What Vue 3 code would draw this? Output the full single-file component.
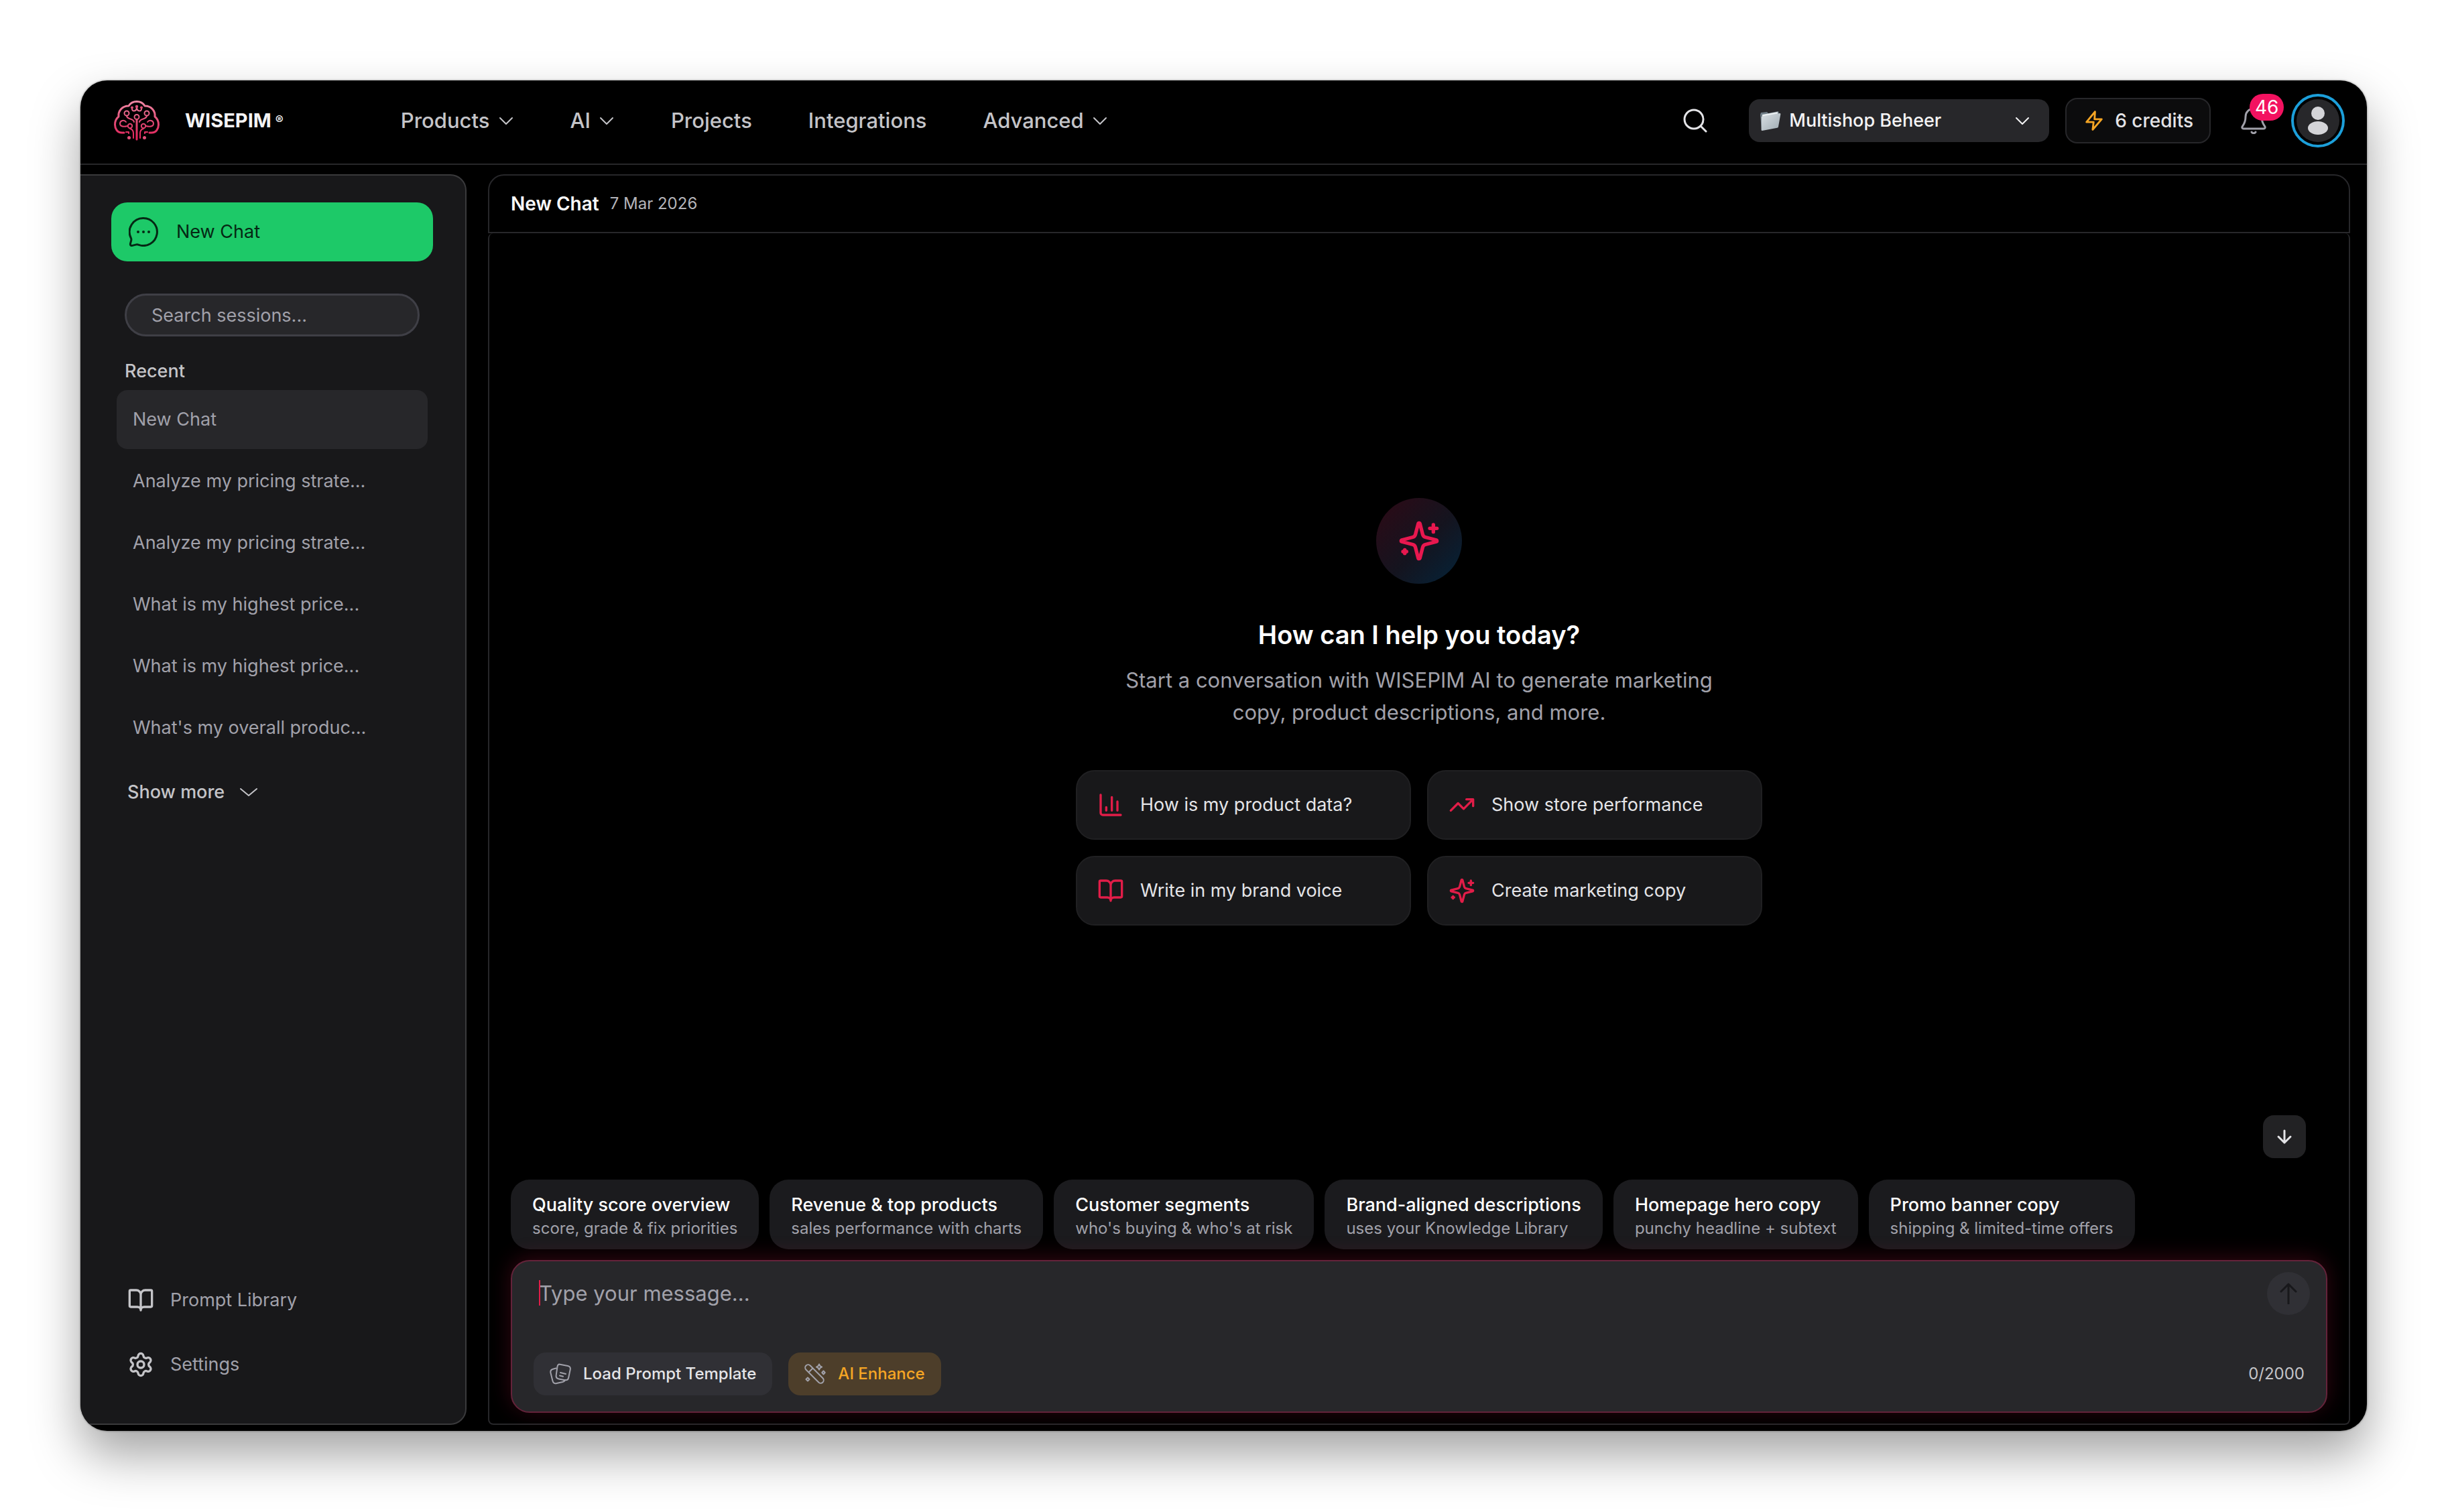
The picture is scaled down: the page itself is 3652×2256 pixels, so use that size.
<script setup>
import { ref } from 'vue';

const search = ref('');
const message = ref('');
const shop = ref('Multishop Beheer');
const active = ref(0);

const nav = [
  { label: 'Products', menu: true },
  { label: 'AI', menu: true },
  { label: 'Projects', menu: false },
  { label: 'Integrations', menu: false },
  { label: 'Advanced', menu: true }
];

const sessions = [
  'New Chat',
  'Analyze my pricing strate...',
  'Analyze my pricing strate...',
  'What is my highest price...',
  'What is my highest price...',
  "What's my overall produc..."
];

const starters = [
  { icon: 'chart', label: 'How is my product data?' },
  { icon: 'trend', label: 'Show store performance' },
  { icon: 'book', label: 'Write in my brand voice' },
  { icon: 'sparkles', label: 'Create marketing copy' }
];

const chips = [
  { title: 'Quality score overview', text: 'score, grade & fix priorities' },
  { title: 'Revenue & top products', text: 'sales performance with charts' },
  { title: 'Customer segments', text: "who's buying & who's at risk" },
  { title: 'Brand-aligned descriptions', text: 'uses your Knowledge Library' },
  { title: 'Homepage hero copy', text: 'punchy headline + subtext' },
  { title: 'Promo banner copy', text: 'shipping & limited-time offers' }
];

const icons = {
  chart: 'M3 3v16a2 2 0 0 0 2 2h16M18 17V9M13 17V5M8 17v-3',
  trend: 'M16 7h6v6M22 7l-8.5 8.5-5-5L2 17',
  book: 'M12 7v14M3 18a1 1 0 0 1-1-1V4a1 1 0 0 1 1-1h5a4 4 0 0 1 4 4 4 4 0 0 1 4-4h5a1 1 0 0 1 1 1v13a1 1 0 0 1-1 1h-6a3 3 0 0 0-3 3 3 3 0 0 0-3-3z',
  sparkles: 'M9.937 15.5A2 2 0 0 0 8.5 14.063l-6.135-1.582a.5.5 0 0 1 0-.962L8.5 9.936A2 2 0 0 0 9.937 8.5l1.582-6.135a.5.5 0 0 1 .963 0L14.063 8.5A2 2 0 0 0 15.5 9.937l6.135 1.581a.5.5 0 0 1 0 .964L15.5 14.063a2 2 0 0 0-1.437 1.437l-1.582 6.135a.5.5 0 0 1-.963 0zM20 3v4M22 5h-4M4 17v2M5 18H3'
};
</script>

<template>
  <div class="page">
    <div class="window">
      <header class="topbar">
        <a href="#" class="brand">
          <svg class="logo" viewBox="0 0 68 60" fill="none" stroke="url(#brain)" stroke-width="2.2" stroke-linecap="round">
            <defs>
              <linearGradient id="brain" gradientUnits="userSpaceOnUse" x1="0" y1="0" x2="0" y2="60">
                <stop offset="0" stop-color="#f08aa6" />
                <stop offset="0.6" stop-color="#e0436f" />
                <stop offset="1" stop-color="#e81e5a" />
              </linearGradient>
            </defs>
            <path stroke-width="3" d="M15 48H12C5 48 1.500 42 1.500 36 1.500 31 3 27 7 24 6 16 12 8 22 8 25 3 29 1.500 34 1.500S43 3 46 8C56 8 62 16 61 24 65 27 66.500 31 66.500 36 66.500 42 63 48 56 48H53" />
            <path d="M27 11C26 17 33 17 34 11 35 17 42 17 41 11" />
            <path d="M19 23C20 29 29 26 30 32M49 23C48 29 39 26 38 32" />
            <path d="M18 32C15 28 9 30 9 34.500 9 38 13 40 20 38M50 32C53 28 59 30 59 34.500 59 38 55 40 48 38" />
            <path d="M24 42C28 43 29 45 29 49V56M44 42C40 43 39 45 39 49V56" />
            <path stroke-width="3" d="M34 29L34.010 58" />
            <path d="M18 47H22V49M50 47H46V49" />
            <circle cx="19" cy="19" r="3.500" />
            <circle cx="49" cy="19" r="3.500" />
            <circle cx="34" cy="24.500" r="3.500" />
            <circle cx="24" cy="38" r="3.200" />
            <circle cx="44" cy="38" r="3.200" />
            <g stroke="none" fill="#e0507a">
              <circle cx="27" cy="10.500" r="2" />
              <circle cx="34" cy="9" r="2.200" />
              <circle cx="41" cy="10.500" r="2" />
              <circle cx="22.500" cy="55.500" r="2.500" />
              <circle cx="45.500" cy="55.500" r="2.500" />
            </g>
          </svg>
          <span class="brand-name">WISEPIM<span class="reg">®</span></span>
        </a>

        <nav class="nav">
          <a v-for="item in nav" :key="item.label" href="#">
            {{ item.label }}
            <svg v-if="item.menu" class="chevron" viewBox="0 0 24 24"><path d="M3 8l9 9 9-9" /></svg>
          </a>
        </nav>

        <div class="tools">
          <button class="icon-btn" aria-label="Search">
            <svg viewBox="0 0 40 40"><circle cx="18" cy="18" r="14" /><path d="M28 28l8 8" /></svg>
          </button>

          <div class="shop">
            <svg class="folder" viewBox="0 0 32 32">
              <defs>
                <linearGradient id="folder" x1="0" y1="0" x2="1" y2="1">
                  <stop offset="0" stop-color="#d8dfe3" />
                  <stop offset="1" stop-color="#9fabb2" />
                </linearGradient>
              </defs>
              <path fill="#6f7d86" d="M1 7l1-3 9-1 2 2 15-3 1 3-3 20L3 30z" />
              <path fill="#e9eef0" d="M4 7l23-4v4L4 11z" />
              <path fill="url(#folder)" d="M4 9.500L30 5c1 0 1.500.5 1.300 1.500L28 25c-.2 1-.8 1.500-1.700 1.700L4 31c-1 .2-1.500-.4-1.400-1.400L2.800 11c0-.9.400-1.400 1.200-1.500z" />
            </svg>
            <select v-model="shop" aria-label="Shop">
              <option>Multishop Beheer</option>
            </select>
            <svg class="chevron" viewBox="0 0 24 24"><path d="M3 8l9 9 9-9" /></svg>
          </div>

          <button class="credits">
            <svg viewBox="0 0 24 24"><path d="M13 2.500L4 13.500h7.500L10.500 21.500l9.500-11h-7.500z" /></svg>
            6 credits
          </button>

          <button class="icon-btn bell" aria-label="Notifications">
            <svg viewBox="0 0 40 40">
              <path d="M20 2a12 12 0 0 0-12 12c0 9-3 12-5 15-.6 1.500 0 3 2 3h30c2 0 2.600-1.500 2-3-2-3-5-6-5-15A12 12 0 0 0 20 2z" />
              <path d="M17 37a3.500 3.500 0 0 0 6 0" />
            </svg>
            <span class="badge">46</span>
          </button>

          <button class="avatar" aria-label="Account">
            <svg viewBox="0 0 64 64"><circle cx="32" cy="21" r="10" /><ellipse cx="32" cy="43" rx="15" ry="10" /></svg>
          </button>
        </div>
      </header>

      <div class="body">
        <aside class="sidebar">
          <button class="new-chat">
            <svg viewBox="0 0 44 44">
              <path d="M22 1.500a20.500 20.500 0 1 1-7 39.800c-2-.7-3-.6-4.500-.2l-5 1.300c-2.300.6-3.500-.9-3-3l1.200-4.600c.4-1.500.3-2.400-.4-3.800A20.500 20.500 0 0 1 22 1.500z" />
              <g class="dots"><circle cx="14" cy="22" r="2" /><circle cx="22" cy="22" r="2" /><circle cx="30" cy="22" r="2" /></g>
            </svg>
            New Chat
          </button>

          <input v-model="search" class="search" type="text" aria-label="Search sessions" placeholder="Search sessions..." />

          <h2 class="recent">Recent</h2>
          <ul class="sessions">
            <li v-for="(name, i) in sessions" :key="i">
              <button :class="{ active: active === i }" @click="active = i">{{ name }}</button>
            </li>
          </ul>
          <button class="more">
            Show more
            <svg viewBox="0 0 28 28"><path d="M2 9l12 10L26 9" /></svg>
          </button>

          <div class="side-links">
            <a href="#">
              <svg viewBox="0 0 24 24"><path :d="icons.book" /></svg>
              Prompt Library
            </a>
            <a href="#">
              <svg viewBox="0 0 24 24">
                <path d="M9.671 4.136a2.340 2.340 0 0 1 4.659 0 2.340 2.340 0 0 0 3.319 1.915 2.340 2.340 0 0 1 2.330 4.033 2.340 2.340 0 0 0 0 3.831 2.340 2.340 0 0 1-2.330 4.033 2.340 2.340 0 0 0-3.319 1.915 2.340 2.340 0 0 1-4.659 0 2.340 2.340 0 0 0-3.320-1.915 2.340 2.340 0 0 1-2.330-4.033 2.340 2.340 0 0 0 0-3.831A2.340 2.340 0 0 1 6.350 6.051a2.340 2.340 0 0 0 3.319-1.915" />
                <circle cx="12" cy="12" r="3" />
              </svg>
              Settings
            </a>
          </div>
        </aside>

        <main class="chat">
          <div class="chat-head">
            <h1>New Chat</h1>
            <time datetime="2026-03-07">7 Mar 2026</time>
          </div>

          <div class="chat-body">
            <section class="welcome">
              <div class="orb">
                <svg viewBox="0 0 24 24"><path :d="icons.sparkles" /></svg>
              </div>
              <h2>How can I help you today?</h2>
              <p>Start a conversation with WISEPIM AI to generate marketing copy, product descriptions, and more.</p>
              <div class="starters">
                <button v-for="s in starters" :key="s.label">
                  <svg viewBox="0 0 24 24"><path :d="icons[s.icon]" /></svg>
                  {{ s.label }}
                </button>
              </div>
            </section>

            <button class="scroll-down" aria-label="Scroll to bottom">
              <svg viewBox="0 0 24 24"><path d="M12 3v18M3 12l9 9 9-9" /></svg>
            </button>

            <div class="chips">
              <button v-for="c in chips" :key="c.title">
                <strong>{{ c.title }}</strong>
                <span>{{ c.text }}</span>
              </button>
            </div>

            <form class="composer" @submit.prevent>
              <div class="composer-top">
                <div class="field">
                  <textarea v-model="message" rows="1" maxlength="2000" aria-label="Message" placeholder="Type your message..."></textarea>
                  <span class="caret"></span>
                </div>
                <button class="send" type="submit" aria-label="Send">
                  <svg viewBox="0 0 32 32"><path d="M16 31V2M5 13L16 2l11 11" /></svg>
                </button>
              </div>
              <div class="composer-bottom">
                <button type="button" class="pill">
                  <svg viewBox="0 0 32 32">
                    <path d="M14 1.500l13 2.500c3 .6 4.300 2.500 3.700 5.500l-2.500 12c-.6 3-2.500 4.300-5.500 3.700l-9-1.800c-3-.6-4.500-2.500-4-5.500L11.500 5c.3-2.500 1-3 2.500-3.500z" />
                    <path d="M9.500 7.500L5 8.700C2 9.500.8 11.500 1.500 14.500l3 12c.7 3 2.800 4.300 5.800 3.500l9-2c2-.5 3.200-1.500 4-3M16 14l8 2M15 18.500l5 1.200" />
                  </svg>
                  Load Prompt Template
                </button>
                <button type="button" class="pill enhance">
                  <svg viewBox="0 0 32 32">
                    <path d="M2.500 3.500a4.400 4.400 0 0 1 6.200 0l19 19a4.400 4.400 0 0 1-6.200 6.200l-19-19a4.400 4.400 0 0 1 0-6.200zM6.500 13.500l6-6" />
                    <path d="M22 1.500l1.400 2.700 2.700 1.400-2.700 1.400L22 9.700l-1.400-2.700L18 5.600l2.700-1.400zM28.500 11.500l2.200 2.500-2.200 2.500-2.200-2.500zM5 21.500l2.500 2.500L5 26.500 2.500 24z" />
                  </svg>
                  AI Enhance
                </button>
                <span class="count">{{ message.length }}/2000</span>
              </div>
            </form>
          </div>
        </main>
      </div>
    </div>
  </div>
</template>

<style>
body {
  margin: 0;
  background: #ffffff;
}
</style>

<style scoped>
* {
  box-sizing: border-box;
}

.page {
  display: flex;
  min-height: 100vh;
  padding: 120px 121px 121px 120px;
  font-family: Inter, "Liberation Sans", sans-serif;
  font-size: 27px;
  line-height: 40px;
  color: #e4e4e7;
}

.window {
  flex: 1;
  min-width: 0;
  display: flex;
  flex-direction: column;
  background: #000000;
  border-radius: 40px;
  overflow: hidden;
  box-shadow: 0 0 3px rgba(0, 0, 0, 0.5), 0 36px 72px rgba(0, 0, 0, 0.36);
}

button,
input,
select,
textarea {
  font: inherit;
  color: inherit;
  background: none;
  border: none;
  padding: 0;
  margin: 0;
  outline: none;
}

button {
  display: flex;
  align-items: center;
  cursor: pointer;
}

a {
  color: inherit;
  text-decoration: none;
}

h1,
h2,
p,
ul {
  margin: 0;
  padding: 0;
  list-style: none;
}

svg {
  display: block;
  flex: none;
  fill: none;
  stroke: currentColor;
  stroke-width: 2;
  stroke-linecap: round;
  stroke-linejoin: round;
}

/* top bar */
.topbar {
  display: flex;
  align-items: center;
  height: 126px;
  padding: 0 33px 4px 50px;
  border-bottom: 2px solid #27272a;
}

.brand {
  display: flex;
  align-items: center;
  gap: 38px;
}

.logo {
  width: 68px;
  height: 60px;
  stroke: url(#brain);
}

.brand-name {
  display: flex;
  gap: 6px;
  font-size: 29px;
  font-weight: 700;
  color: #f4f4f5;
}

.reg {
  width: 14px;
  font-size: 18px;
  line-height: 38px;
}

.nav {
  display: flex;
  gap: 84px;
  margin-left: 173px;
  font-size: 31px;
  font-weight: 500;
  color: #c4c4c8;
}

.nav a {
  display: flex;
  align-items: center;
  gap: 12px;
}

.chevron {
  width: 24px;
  height: 24px;
}

.tools {
  display: flex;
  align-items: center;
  margin-left: auto;
}

.icon-btn svg {
  width: 40px;
  height: 40px;
  stroke-width: 3;
}

.shop {
  display: flex;
  align-items: center;
  width: 448px;
  height: 64px;
  margin: 0 24px 0 60px;
  padding: 0 28px 0 16px;
  background: #27272a;
  border-radius: 16px;
  color: #f4f4f5;
}

.folder {
  width: 32px;
  height: 32px;
  margin-right: 12px;
  stroke: none;
}

.shop select {
  flex: 1;
  appearance: none;
  font-weight: 500;
}

.credits {
  gap: 14px;
  height: 68px;
  padding: 0 24px;
  border: 2px solid #27272a;
  border-radius: 18px;
  background: #0c0c0d;
  font-size: 28px;
  font-weight: 500;
}

.credits svg {
  width: 34px;
  height: 34px;
  color: #f5a524;
}

.bell {
  position: relative;
  margin: 0 36px 0 44px;
  color: #a1a1aa;
}

.badge {
  position: absolute;
  left: 14px;
  top: -20px;
  min-width: 50px;
  height: 40px;
  padding: 0 8px;
  border-radius: 20px;
  background: #f31260;
  color: #ffffff;
  font-size: 28px;
  text-align: center;
}

.avatar {
  justify-content: center;
  width: 80px;
  height: 80px;
  border: 4px solid #1c9fda;
  border-radius: 50%;
}

.avatar svg {
  width: 64px;
  height: 64px;
  border-radius: 50%;
  background: #27272a;
  fill: #d4d4d8;
  stroke: none;
}

/* layout */
.body {
  flex: 1;
  display: flex;
  gap: 32px;
  padding: 14px 25px 9px 0;
}

.sidebar {
  display: flex;
  flex-direction: column;
  width: 576px;
  padding: 40px 48px 44px 46px;
  background: #18181a;
  border: 2px solid #3a3a3c;
  border-left: none;
  border-radius: 0 24px 24px 0;
  color: #a1a1aa;
}

.new-chat {
  gap: 27px;
  height: 88px;
  padding: 0 26px;
  border-radius: 24px;
  background: #1dc968;
  color: #052814;
}

.new-chat svg {
  width: 44px;
  height: 44px;
  stroke-width: 3;
}

.dots {
  fill: currentColor;
  stroke: none;
}

.search {
  height: 64px;
  margin: 48px 20px 32px;
  padding: 0 37px;
  border: 3px solid #3f3f46;
  border-radius: 32px;
  background: #27272a;
}

.search::placeholder {
  color: #a1a1aa;
  opacity: 1;
}

.recent {
  margin: 0 20px 8px;
  font-size: 27px;
  font-weight: 500;
  color: #c4c4c8;
}

.sessions {
  display: flex;
  flex-direction: column;
  gap: 4px;
  margin: 0 8px;
}

.sessions button {
  width: 100%;
  height: 88px;
  padding: 0 24px;
  border-radius: 16px;
}

.sessions .active {
  background: #27272a;
}

.more {
  align-self: flex-start;
  gap: 22px;
  margin: 32px 24px;
  font-weight: 500;
  color: #c4c4c8;
}

.more svg {
  width: 28px;
  height: 28px;
}

.side-links {
  display: flex;
  flex-direction: column;
  gap: 8px;
  margin: auto 24px 0;
}

.side-links a {
  display: flex;
  align-items: center;
  gap: 24px;
  height: 88px;
}

.side-links svg {
  width: 40px;
  height: 40px;
  color: #c4c4c8;
}

/* chat */
.chat {
  flex: 1;
  min-width: 0;
  display: flex;
  flex-direction: column;
}

.chat-head {
  display: flex;
  align-items: center;
  gap: 16px;
  height: 88px;
  padding: 0 32px;
  border: 2px solid #27272a;
  border-radius: 24px 24px 0 0;
}

.chat-head h1 {
  font-size: 28px;
  font-weight: 600;
  color: #fafafa;
}

.chat-head time {
  font-size: 24px;
  color: #b4b4ba;
}

.chat-body {
  flex: 1;
  display: flex;
  flex-direction: column;
  padding: 0 32px 16px;
  border: 2px solid #27272a;
  border-top: none;
  border-radius: 8px;
}

.welcome {
  flex: 1;
  display: flex;
  flex-direction: column;
  align-items: center;
  justify-content: center;
  padding-top: 112px;
}

.orb {
  display: flex;
  align-items: center;
  justify-content: center;
  width: 128px;
  height: 128px;
  border-radius: 50%;
  background: linear-gradient(135deg, #2e0915, #14141f 55%, #04243a);
  color: #e8184f;
}

.orb svg {
  width: 64px;
  height: 64px;
}

.welcome h2 {
  margin: 48px 0 16px;
  font-size: 38px;
  font-weight: 600;
  line-height: 56px;
  color: #ffffff;
}

.welcome p {
  max-width: 896px;
  font-size: 31px;
  line-height: 48px;
  text-align: center;
  color: #a1a1aa;
}

.starters {
  display: grid;
  grid-template-columns: 1fr 1fr;
  gap: 24px;
  width: 1024px;
  max-width: 100%;
  margin-top: 62px;
}

.starters button {
  gap: 24px;
  height: 104px;
  padding: 0 30px;
  border: 2px solid #202022;
  border-radius: 28px;
  background: #18181a;
}

.starters svg {
  width: 40px;
  height: 40px;
  color: #e11d48;
}

.scroll-down {
  align-self: flex-end;
  justify-content: center;
  width: 64px;
  height: 64px;
  margin: 0 32px 32px;
  border-radius: 16px;
  background: #222224;
}

.scroll-down svg {
  width: 24px;
  height: 24px;
  stroke-width: 3;
}

.chips {
  display: flex;
  gap: 16px;
}

.chips button {
  flex-direction: column;
  align-items: flex-start;
  justify-content: center;
  height: 104px;
  padding: 4px 32px 0;
  border-radius: 28px;
  background: #1b1b1e;
  white-space: nowrap;
}

.chips strong {
  font-weight: 500;
  line-height: 38px;
  color: #ffffff;
}

.chips span {
  font-size: 24px;
  line-height: 32px;
  color: #a1a1aa;
}

.composer {
  height: 228px;
  margin-top: 16px;
  padding: 16px 24px 24px 32px;
  display: flex;
  flex-direction: column;
  justify-content: space-between;
  border: 2px solid #64233a;
  border-radius: 28px;
  background: #27272a;
  box-shadow: 0 -4px 32px rgba(225, 29, 72, 0.22);
}

.composer-top {
  display: flex;
}

.field {
  position: relative;
  flex: 1;
  padding: 12px 8px;
}

.field textarea {
  display: block;
  width: 100%;
  height: 40px;
  font-size: 31px;
  line-height: 40px;
  resize: none;
  overflow: hidden;
}

.field textarea::placeholder {
  color: #a1a1aa;
  opacity: 1;
}

.caret {
  position: absolute;
  left: 8px;
  top: 12px;
  width: 2px;
  height: 38px;
  background: #e11d48;
}

.send {
  justify-content: center;
  width: 64px;
  height: 64px;
  border-radius: 50%;
  background: #303035;
  color: #18181b;
}

.send svg {
  width: 32px;
  height: 32px;
  stroke-width: 3;
}

.composer-bottom {
  display: flex;
  align-items: center;
  gap: 24px;
  font-size: 24px;
}

.pill {
  gap: 18px;
  height: 64px;
  padding: 0 24px;
  border-radius: 18px;
  background: #303035;
  font-weight: 500;
}

.pill svg {
  width: 32px;
  height: 32px;
  color: #a1a1aa;
}

.enhance {
  background: #4d3e2a;
  color: #f5a524;
}

.count {
  margin: 0 8px 0 auto;
  color: #c4c4c8;
}
</style>
